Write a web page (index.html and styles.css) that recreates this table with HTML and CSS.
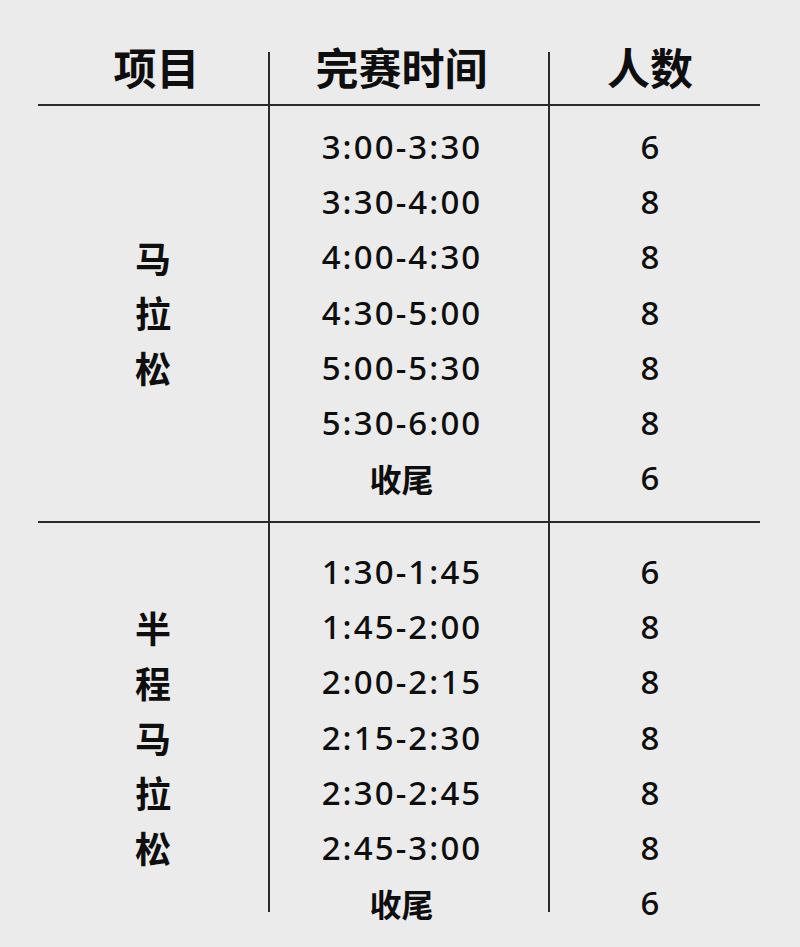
FILE: index.html
```html
<!DOCTYPE html>
<html lang="zh-CN">
<head>
<meta charset="utf-8">
<title>完赛时间</title>
<link rel="stylesheet" href="styles.css">
</head>
<body>
<div class="table">
  <div class="cell head c1"><span>项目</span></div>
  <div class="cell head c2"><span>完赛时间</span></div>
  <div class="cell head c3"><span>人数</span></div>

  <div class="cell body g1 c1">
    <div class="row"></div><div class="row"></div>
    <div class="row label">马</div><div class="row label">拉</div><div class="row label">松</div>
    <div class="row"></div><div class="row"></div>
  </div>
  <div class="cell body g1 c2">
    <div class="row time">3:00-3:30</div>
    <div class="row time">3:30-4:00</div>
    <div class="row time">4:00-4:30</div>
    <div class="row time">4:30-5:00</div>
    <div class="row time">5:00-5:30</div>
    <div class="row time">5:30-6:00</div>
    <div class="row tail">收尾</div>
  </div>
  <div class="cell body g1 c3">
    <div class="row">6</div><div class="row">8</div><div class="row">8</div><div class="row">8</div>
    <div class="row">8</div><div class="row">8</div><div class="row">6</div>
  </div>

  <div class="cell body g2 c1">
    <div class="row"></div>
    <div class="row label">半</div><div class="row label">程</div><div class="row label">马</div><div class="row label">拉</div><div class="row label">松</div>
    <div class="row"></div>
  </div>
  <div class="cell body g2 c2">
    <div class="row time">1:30-1:45</div>
    <div class="row time">1:45-2:00</div>
    <div class="row time">2:00-2:15</div>
    <div class="row time">2:15-2:30</div>
    <div class="row time">2:30-2:45</div>
    <div class="row time">2:45-3:00</div>
    <div class="row tail">收尾</div>
  </div>
  <div class="cell body g2 c3">
    <div class="row">6</div><div class="row">8</div><div class="row">8</div><div class="row">8</div>
    <div class="row">8</div><div class="row">8</div><div class="row">6</div>
  </div>
</div>
</body>
</html>
```
FILE: styles.css
```css
html, body {
  margin: 0;
  padding: 0;
  background: #ebebeb;
}
body {
  width: 800px;
  height: 947px;
  overflow: hidden;
  font-family: "Noto Sans", "Noto Sans CJK SC", sans-serif;
  color: #0e0e0e;
}
.table {
  display: grid;
  grid-template-columns: 230px 280px 212px;
  margin: 52px 0 0 38px;
  width: 722px;
}
.cell {
  box-sizing: border-box;
}
.c2, .c3 {
  border-left: 2px solid #2a2a2a;
}
.head {
  height: 54px;
  border-bottom: 2px solid #2a2a2a;
  display: flex;
  justify-content: center;
  align-items: flex-start;
}
.head span {
  display: block;
  margin-top: -7px;
  font-size: 43px;
  line-height: 43px;
  font-weight: 700;
  font-family: "Noto Sans CJK SC", sans-serif;
}
.head.c1 { padding-left: 7px; }
.head.c2 { padding-right: 15px; }
.head.c3 { padding-right: 10px; }

.body.g1 {
  height: 417px;
  padding-top: 13px;
  border-bottom: 2px solid #2a2a2a;
}
.body.g2 {
  height: 389px;
  padding-top: 21px;
  overflow: visible;
}
.row {
  height: 55.17px;
  display: flex;
  align-items: center;
  justify-content: center;
  font-size: 33px;
  font-weight: 500;
  white-space: nowrap;
}
.c2 .row { padding-right: 15px; }
.c3 .row { padding-right: 10px; }
.c2 .row.time {
  letter-spacing: 2.1px;
  padding-right: 14px;
}
.row.label {
  font-family: "Noto Sans CJK SC", sans-serif;
  font-size: 36px;
  font-weight: 700;
}
.row.tail {
  font-family: "Noto Sans CJK SC", sans-serif;
  font-size: 32px;
  font-weight: 700;
}
```
